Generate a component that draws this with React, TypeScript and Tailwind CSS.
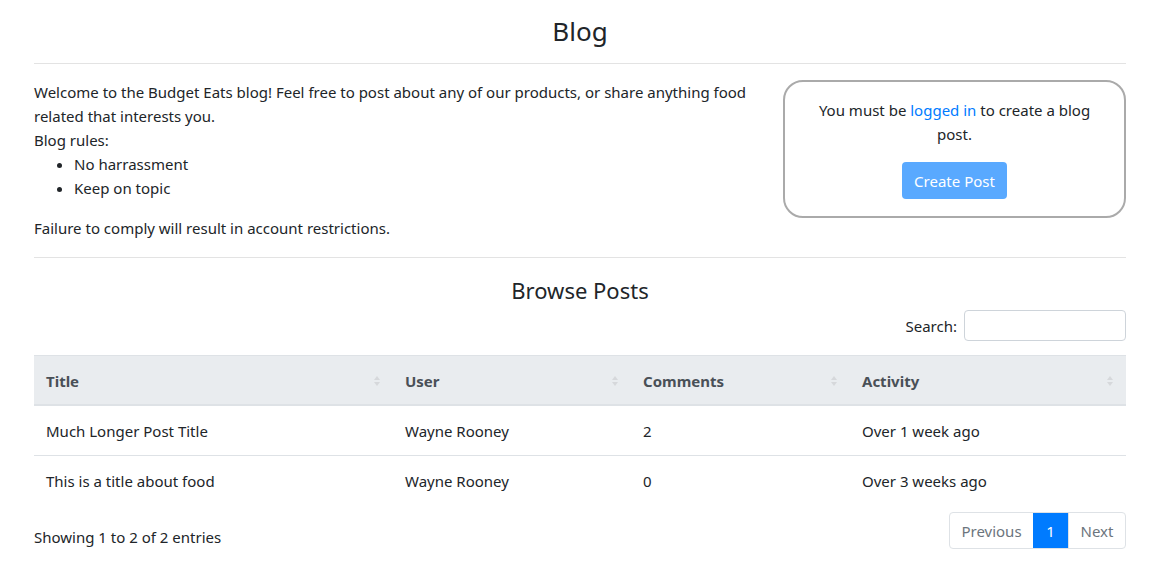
import React from "react";

const SortIcon = () => (
  <svg width="8" height="14" viewBox="0 0 8 14" className="shrink-0">
    <path d="M4 2 L7 6 L1 6 Z" fill="#d6d8db" />
    <path d="M4 12 L7 8 L1 8 Z" fill="#d6d8db" />
  </svg>
);

const posts = [
  { title: "Much Longer Post Title", user: "Wayne Rooney", comments: 2, activity: "Over 1 week ago" },
  { title: "This is a title about food", user: "Wayne Rooney", comments: 0, activity: "Over 3 weeks ago" },
];

const cols = [
  { label: "Title", w: "w-[359px]" },
  { label: "User", w: "w-[238px]" },
  { label: "Comments", w: "w-[219px]" },
  { label: "Activity", w: "flex-1" },
];

export default function App() {
  return (
    <div className="min-h-[574px] bg-white text-[#212529] text-[15px] leading-6 font-['Noto_Sans',sans-serif]">
      <div className="mx-[34px] w-[1092px]">
        <h2 className="text-center text-[26px] leading-[34px] pt-[14px] pb-[15px]">Blog</h2>
        <hr className="border-t border-[#e3e3e3]" />

        <div className="flex gap-[31px] mt-[16px]">
          <div className="flex-1">
            <p>
              Welcome to the Budget Eats blog! Feel free to post about any of our products, or share anything food
              related that interests you.
            </p>
            <p>Blog rules:</p>
            <ul className="list-disc pl-[40px]">
              <li>No harrassment</li>
              <li>Keep on topic</li>
            </ul>
            <p className="mt-[16px]">Failure to comply will result in account restrictions.</p>
          </div>
          <div className="w-[343px] h-[138px] border-2 border-[#aaaaaa] rounded-[20px] flex flex-col items-center pt-[16px] px-[30px] text-center">
            <p>
              You must be <a className="text-[#007bff]">logged in</a> to create a blog post.
            </p>
            <button className="mt-[16px] h-[37px] px-[12px] rounded-[4px] bg-[#59a9ff] text-white">Create Post</button>
          </div>
        </div>

        <hr className="border-t border-[#e3e3e3] mt-[17px]" />

        <h3 className="text-center text-[22px] leading-[29px] mt-[18px]">Browse Posts</h3>
        <div className="flex justify-end items-center gap-[7px] mt-[5px]">
          <span>Search:</span>
          <input className="w-[162px] h-[31px] border border-[#ced4da] rounded-[4px]" />
        </div>

        <div className="mt-[14px]">
          <div className="flex h-[51px] bg-[#e9ecef] border-t border-[#dee2e6] border-b-2">
            {cols.map((c) => (
              <div key={c.label} className={`${c.w} flex items-center justify-between pl-[12px] pr-[12px] pt-[2px] font-bold text-[#495057]`}>
                <span>{c.label}</span>
                <SortIcon />
              </div>
            ))}
          </div>
          {posts.map((p, i) => (
            <div key={i} className={`flex items-center ${i > 0 ? "h-[50px] border-t border-[#dee2e6]" : "h-[49px]"}`}>
              <div className="w-[359px] pl-[12px]">{p.title}</div>
              <div className="w-[238px] pl-[12px]">{p.user}</div>
              <div className="w-[219px] pl-[12px]">{p.comments}</div>
              <div className="flex-1 pl-[12px]">{p.activity}</div>
            </div>
          ))}
        </div>

        <div className="flex justify-between items-center mt-[7px]">
          <div className="pt-[12px]">Showing 1 to 2 of 2 entries</div>
          <div className="flex h-[37px] border border-[#dee2e6] rounded-[4px] overflow-hidden">
            <span className="w-[83px] flex items-center justify-center text-[#6c757d]">Previous</span>
            <span className="w-[35px] flex items-center justify-center bg-[#007bff] text-white">1</span>
            <span className="w-[57px] flex items-center justify-center text-[#6c757d] border-l border-[#dee2e6]">Next</span>
          </div>
        </div>
      </div>
    </div>
  );
}
